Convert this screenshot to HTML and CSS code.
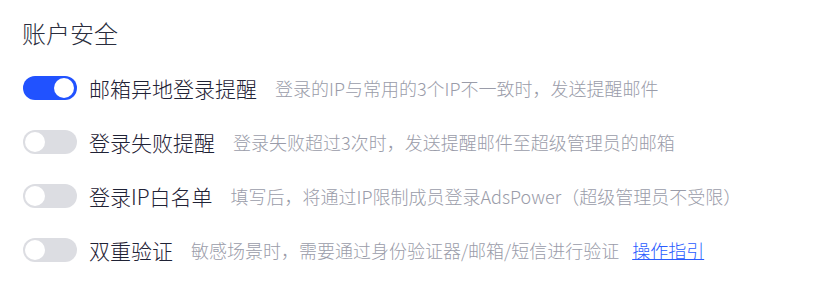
FILE: index.html
```html
<!DOCTYPE html>
<html lang="zh-CN">
<head>
<meta charset="utf-8">
<link rel="stylesheet" href="styles.css">
</head>
<body>
<div class="panel">
  <h2 class="title">账户安全</h2>
  <div class="row">
    <span class="switch on"><span class="knob"></span></span>
    <span class="label">邮箱异地登录提醒</span>
    <span class="desc">登录的IP与常用的3个IP不一致时，发送提醒邮件</span>
  </div>
  <div class="row">
    <span class="switch"><span class="knob"></span></span>
    <span class="label">登录失败提醒</span>
    <span class="desc">登录失败超过3次时，发送提醒邮件至超级管理员的邮箱</span>
  </div>
  <div class="row">
    <span class="switch"><span class="knob"></span></span>
    <span class="label">登录IP白名单</span>
    <span class="desc">填写后，将通过IP限制成员登录AdsPower（超级管理员不受限）</span>
  </div>
  <div class="row">
    <span class="switch"><span class="knob"></span></span>
    <span class="label">双重验证</span>
    <span class="desc">敏感场景时，需要通过身份验证器/邮箱/短信进行验证</span>
    <a class="link" href="#">操作指引</a>
  </div>
</div>
</body>
</html>
```
FILE: styles.css
```css
html, body {
  margin: 0;
  padding: 0;
  background: #ffffff;
}
body {
  font-family: "Noto Sans CJK SC", "Noto Sans", sans-serif;
}
.panel {
  padding: 17px 0 0 22px;
}
.title {
  margin: 0 0 12px 0;
  font-size: 24px;
  font-weight: 300;
  line-height: 32px;
  color: #2a2d3d;
}
.row {
  display: flex;
  align-items: center;
  height: 54px;
}
.switch {
  flex: none;
  width: 54px;
  height: 24px;
  margin-left: 1px;
  border-radius: 12px;
  background: #dcdde2;
  display: flex;
  align-items: center;
  padding: 0 2px;
  box-sizing: border-box;
}
.switch.on {
  background: #2152ff;
  justify-content: flex-end;
  padding: 0 3px;
}
.knob {
  width: 20px;
  height: 20px;
  border-radius: 50%;
  background: #ffffff;
}
.label {
  margin-left: 12px;
  font-size: 21px;
  font-weight: 300;
  color: #1f2235;
}
.desc {
  margin-left: 18px;
  font-size: 18px;
  font-weight: 300;
  color: #9a9ca9;
}
.link {
  margin-left: 13px;
  font-size: 18px;
  font-weight: 300;
  color: #2a5cff;
  text-decoration: underline;
}
```
